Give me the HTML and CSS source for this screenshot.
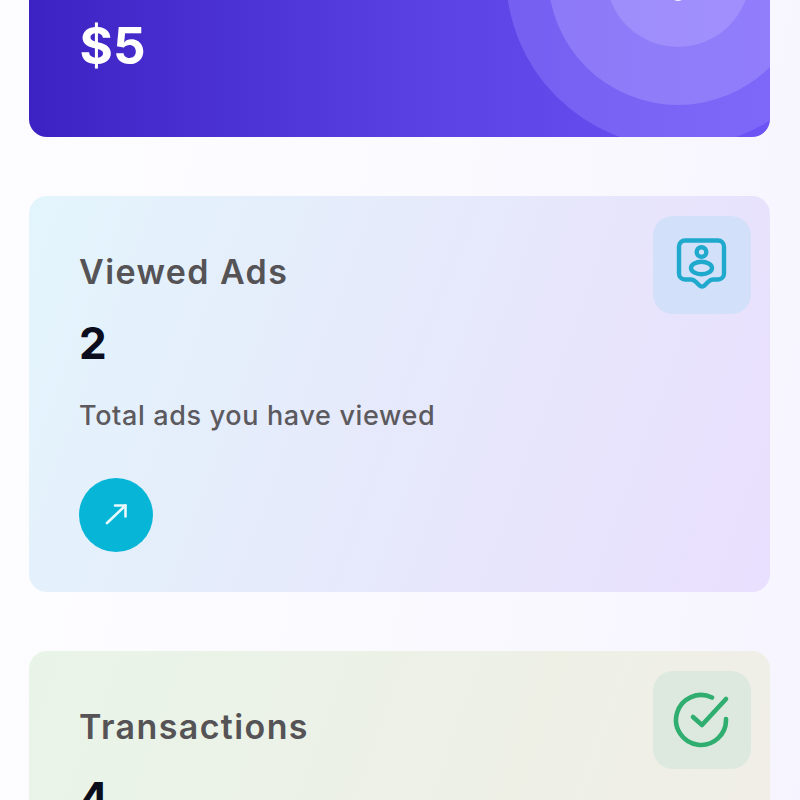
FILE: index.html
```html
<!DOCTYPE html>
<html lang="en">
<head>
<meta charset="utf-8">
<title>Dashboard</title>
<link rel="stylesheet" href="styles.css">
</head>
<body>
<main class="page">
  <section class="hero">
    <div class="ring ring-3"></div>
    <div class="ring ring-2"></div>
    <div class="ring ring-1"></div>
    <div class="hero-icon"></div>
    <p class="hero-value">$5</p>
  </section>

  <section class="card card-blue">
    <div class="tile tile-blue">
      <svg width="58" height="58" viewBox="0 0 58 58" fill="none" stroke="#1fa9cd" stroke-width="4.400" stroke-linecap="round" stroke-linejoin="round">
        <path d="M12 4.500h33a6 6 0 0 1 6 6v27a6 6 0 0 1-6 6h-5c-2 0-3.500 1-5 2.500l-3.500 3.500a3.500 3.500 0 0 1-5 0l-3.500-3.500c-1.500-1.500-3-2.500-5-2.500h-6a6 6 0 0 1-6-6v-27a6 6 0 0 1 6-6z"/>
        <circle cx="28.500" cy="16" r="4.800"/>
        <ellipse cx="28.500" cy="32" rx="10.500" ry="6.200"/>
      </svg>
    </div>
    <h2 class="card-title">Viewed Ads</h2>
    <p class="card-value">2</p>
    <p class="card-text">Total ads you have viewed</p>
    <div class="go-button">
      <svg width="26" height="26" viewBox="0 0 26 26" fill="none" stroke="#e8f9fd" stroke-width="2.600" stroke-linecap="round" stroke-linejoin="round">
        <path d="M4 21L22.500 3.500"/>
        <path d="M12 3.500h10.500v11"/>
      </svg>
    </div>
  </section>

  <section class="card card-green">
    <div class="tile tile-green">
      <svg width="58" height="58" viewBox="0 0 58 58" fill="none" stroke="#2fae70" stroke-width="4.600" stroke-linecap="round" stroke-linejoin="round">
        <path d="M39 6.500A25 25 0 1 0 53 28"/>
        <path d="M20 26l9 8L53 8"/>
      </svg>
    </div>
    <h2 class="card-title">Transactions</h2>
    <p class="card-value">4</p>
  </section>
</main>
</body>
</html>
```
FILE: styles.css
```css
* {
  box-sizing: border-box;
}

html,
body {
  margin: 0;
  height: 100%;
  overflow: hidden;
}

body {
  background: linear-gradient(100deg, #fdfdff 0%, #fbfaff 50%, #f6f4fe 100%);
  font-family: "Inter", "Noto Sans", sans-serif;
}

.page {
  display: flex;
  flex-direction: column;
  gap: 59px;
  padding: 0 30px 0 29px;
  margin-top: -63px;
}

.hero {
  position: relative;
  height: 200px;
  flex: none;
  border-radius: 0 0 18px 18px;
  overflow: hidden;
  background: linear-gradient(90deg, #3d22c3 0%, #5a42e4 55%, #6c55f5 100%);
}

.ring {
  position: absolute;
  border-radius: 50%;
}

.ring-3 {
  left: 477px;
  top: -134px;
  width: 344px;
  height: 344px;
  background: rgba(150, 130, 255, 0.42);
}

.ring-2 {
  left: 519px;
  top: -92px;
  width: 260px;
  height: 260px;
  background: rgba(175, 160, 255, 0.4);
}

.ring-1 {
  left: 577px;
  top: -34px;
  width: 144px;
  height: 144px;
  background: rgba(190, 180, 255, 0.34);
}

.hero-icon {
  position: absolute;
  left: 640px;
  top: 42px;
  width: 18px;
  height: 22px;
  border-radius: 50%;
  background: #f4f2ff;
}

.hero-value {
  position: absolute;
  left: 50.500px;
  bottom: 66px;
  margin: 0;
  font-size: 51px;
  line-height: 1;
  font-weight: 700;
  color: #fff;
}

.card {
  position: relative;
  height: 396px;
  flex: none;
  padding: 55px 50px 0;
  border-radius: 18px;
}

.card-blue {
  background: linear-gradient(110deg, #e3f5fc 0%, #e6e9fb 50%, #e9dffe 100%);
}

.card-green {
  background: linear-gradient(110deg, #e9f4e8 0%, #eef0e6 60%, #f1eee8 100%);
}

.tile {
  position: absolute;
  right: 19px;
  top: 20px;
  width: 98px;
  height: 98px;
  border-radius: 20px;
  display: flex;
  align-items: center;
  justify-content: center;
}

.tile-blue {
  background: #d3e0f9;
}

.tile-green {
  background: #dde9df;
}

.card-title {
  margin: 0;
  font-size: 34px;
  line-height: 42px;
  font-weight: 600;
  letter-spacing: 1.400px;
  color: #555355;
}

.card-value {
  margin: 28px 0 0;
  font-size: 44px;
  line-height: 44px;
  font-weight: 700;
  color: #0b0d1c;
}

.card-text {
  margin: 33px 0 0;
  font-size: 27px;
  line-height: 36px;
  font-weight: 500;
  letter-spacing: 0.640px;
  color: #5c5a5e;
}

.go-button {
  margin-top: 44px;
  width: 74px;
  height: 74px;
  border-radius: 50%;
  background: #07b5d6;
  display: flex;
  align-items: center;
  justify-content: center;
}
```
